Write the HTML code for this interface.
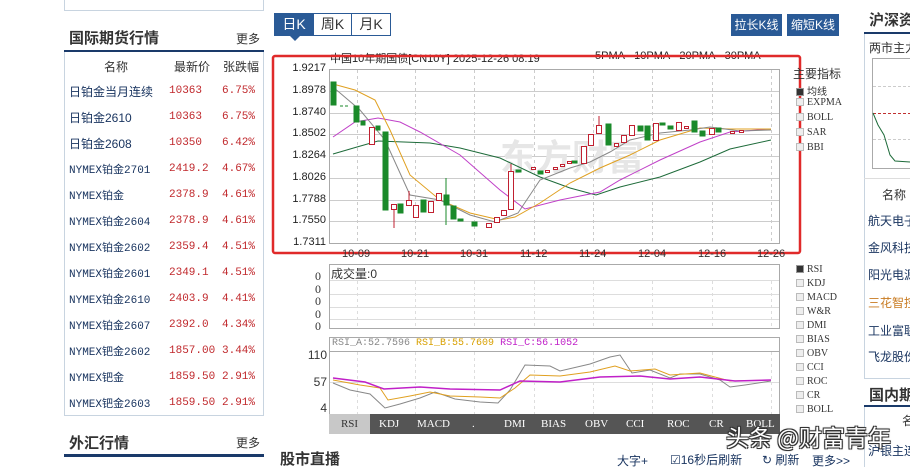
<!DOCTYPE html>
<html><head><meta charset="utf-8"><style>
*{margin:0;padding:0;box-sizing:border-box}
body{width:910px;height:462px;overflow:hidden;background:#fff;font-family:"Liberation Sans","Noto Sans CJK SC",sans-serif;font-size:12px;color:#333;position:relative}
.a{position:absolute;white-space:nowrap}
.m{font-family:"Liberation Mono","Noto Sans CJK SC",monospace}
.nm{color:#1a3560;font-size:12px}
.r{color:#c0282c;font-family:"Liberation Mono",monospace;font-size:11px}
.h{font-size:15px;font-weight:bold;color:#333}
.tab{position:absolute;top:13px;height:23px;border:1px solid #2a5a96;font-size:14px;text-align:center;line-height:21px;color:#333;background:#fff}
.btn{position:absolute;top:14px;height:22px;background:#2a5a96;color:#fff;font-size:12px;line-height:22px;text-align:center}
.yl{position:absolute;width:38px;text-align:right;font-size:11px;color:#222;left:288px}
.ind{position:absolute;left:796px;font-size:10px;color:#333;font-family:"Liberation Serif",serif}
.ind i{display:inline-block;width:8px;height:8px;border:1px solid #bbb;background:#eee;margin-right:3px;vertical-align:-1px}
</style></head><body>
<!-- left column -->
<div class="a" style="left:64px;top:0;width:200px;height:11px;border:1px solid #c8d4e0;border-top:none"></div>
<div class="a h" style="left:69px;top:27px">国际期货行情</div>
<div class="a" style="left:236px;top:30px;font-size:12px">更多</div>
<div class="a" style="left:64px;top:50px;width:200px;height:2px;background:#1a3a6a"></div>
<div class="a" style="left:64px;top:52px;width:200px;height:364px;border:1px solid #c8d4e0;border-top:none"></div>
<div class="a" style="left:104px;top:58px;font-size:12px">名称</div>
<div class="a" style="left:174px;top:58px;font-size:12px">最新价</div>
<div class="a" style="left:223px;top:58px;font-size:12px">张跌幅</div>
<div class="a nm" style="left:69px;top:83px">日铂金当月连续</div><div class="a r" style="left:169px;top:85px">10363</div><div class="a r" style="left:222px;top:85px">6.75%</div>
<div class="a nm" style="left:69px;top:109px">日铂金2610</div><div class="a r" style="left:169px;top:111px">10363</div><div class="a r" style="left:222px;top:111px">6.75%</div>
<div class="a nm" style="left:69px;top:135px">日铂金2608</div><div class="a r" style="left:169px;top:137px">10350</div><div class="a r" style="left:222px;top:137px">6.42%</div>
<div class="a nm m" style="left:69px;top:161px;font-size:11px">NYMEX铂金2701</div><div class="a r" style="left:169px;top:163px">2419.2</div><div class="a r" style="left:222px;top:163px">4.67%</div>
<div class="a nm m" style="left:69px;top:187px;font-size:11px">NYMEX铂金</div><div class="a r" style="left:169px;top:189px">2378.9</div><div class="a r" style="left:222px;top:189px">4.61%</div>
<div class="a nm m" style="left:69px;top:213px;font-size:11px">NYMEX铂金2604</div><div class="a r" style="left:169px;top:215px">2378.9</div><div class="a r" style="left:222px;top:215px">4.61%</div>
<div class="a nm m" style="left:69px;top:239px;font-size:11px">NYMEX铂金2602</div><div class="a r" style="left:169px;top:241px">2359.4</div><div class="a r" style="left:222px;top:241px">4.51%</div>
<div class="a nm m" style="left:69px;top:265px;font-size:11px">NYMEX铂金2601</div><div class="a r" style="left:169px;top:267px">2349.1</div><div class="a r" style="left:222px;top:267px">4.51%</div>
<div class="a nm m" style="left:69px;top:291px;font-size:11px">NYMEX铂金2610</div><div class="a r" style="left:169px;top:293px">2403.9</div><div class="a r" style="left:222px;top:293px">4.41%</div>
<div class="a nm m" style="left:69px;top:317px;font-size:11px">NYMEX铂金2607</div><div class="a r" style="left:169px;top:319px">2392.0</div><div class="a r" style="left:222px;top:319px">4.34%</div>
<div class="a nm m" style="left:69px;top:343px;font-size:11px">NYMEX钯金2602</div><div class="a r" style="left:169px;top:345px">1857.00</div><div class="a r" style="left:222px;top:345px">3.44%</div>
<div class="a nm m" style="left:69px;top:369px;font-size:11px">NYMEX钯金</div><div class="a r" style="left:169px;top:371px">1859.50</div><div class="a r" style="left:222px;top:371px">2.91%</div>
<div class="a nm m" style="left:69px;top:395px;font-size:11px">NYMEX钯金2603</div><div class="a r" style="left:169px;top:397px">1859.50</div><div class="a r" style="left:222px;top:397px">2.91%</div>
<div class="a h" style="left:69px;top:432px">外汇行情</div>
<div class="a" style="left:236px;top:434px">更多</div>
<div class="a" style="left:64px;top:454px;width:200px;height:3px;background:#1a3a6a"></div>

<!-- tabs -->
<div class="tab" style="left:274px;width:40px;background:#2a5a96;color:#fff">日K</div>
<div class="tab" style="left:313px;width:39px">周K</div>
<div class="tab" style="left:351px;width:40px">月K</div>
<div class="a" style="left:290px;top:36px;border:5px solid transparent;border-top-color:#2a5a96;width:0;height:0"></div>
<div class="btn" style="left:731px;width:51px">拉长K线</div>
<div class="btn" style="left:787px;width:52px">缩短K线</div>

<!-- chart title -->
<div class="a" style="left:330px;top:50px;font-size:11px;color:#222">中国10年期国债[CN10Y] 2025-12-26 08:19</div>
<div class="a" style="left:595px;top:50px;font-size:11px;color:#222">5PMA - 10PMA - 20PMA - 30PMA -</div>

<div class="yl" style="top:62px">1.9217</div>
<div class="yl" style="top:84px">1.8978</div>
<div class="yl" style="top:106px">1.8740</div>
<div class="yl" style="top:127px">1.8502</div>
<div class="yl" style="top:149px">1.8264</div>
<div class="yl" style="top:171px">1.8026</div>
<div class="yl" style="top:193px">1.7788</div>
<div class="yl" style="top:214px">1.7550</div>
<div class="yl" style="top:236px">1.7311</div>

<svg class="a" style="left:0;top:0" width="910" height="462">
<g stroke="#ccc" stroke-width="1">
<rect x="329.5" y="69.5" width="450" height="174" fill="none" stroke="#aaa"/>
<line x1="330" x2="779" y1="91.5" y2="91.5"/><line x1="330" x2="779" y1="113.5" y2="113.5"/><line x1="330" x2="779" y1="134.5" y2="134.5"/><line x1="330" x2="779" y1="156.5" y2="156.5"/><line x1="330" x2="779" y1="178.5" y2="178.5"/><line x1="330" x2="779" y1="200.5" y2="200.5"/><line x1="330" x2="779" y1="221.5" y2="221.5"/>
</g>
<g stroke="#ccc" stroke-dasharray="3,3">
<line x1="357.5" x2="357.5" y1="70" y2="243"/><line x1="415.5" x2="415.5" y1="70" y2="243"/><line x1="474.5" x2="474.5" y1="70" y2="243"/><line x1="534.5" x2="534.5" y1="70" y2="243"/><line x1="593.5" x2="593.5" y1="70" y2="243"/><line x1="652.5" x2="652.5" y1="70" y2="243"/><line x1="712.5" x2="712.5" y1="70" y2="243"/><line x1="771.5" x2="771.5" y1="70" y2="243"/>
</g>
<text x="500" y="170" font-size="36" fill="#e6e6e6" font-weight="bold" font-family="Noto Sans CJK SC,sans-serif">东方财富</text>
<g fill="none" stroke-width="1">
<polyline stroke="#1e6b3a" points="333,154 357,147 378,141 430,143 460,148 500,158 540,177 570,188 596,195 620,187 660,177 700,162 730,149 771,140"/>
<polyline stroke="#c040c8" points="333,137 355,122 378,118 400,122 420,132 460,155 500,190 525,209 560,200 600,192 620,180 660,160 700,142 730,132 771,129"/>
<polyline stroke="#e0a020" points="333,84 355,90 375,100 390,130 410,175 440,200 470,213 500,220 515,217 540,203 570,183 600,168 630,155 660,140 700,128 730,129 771,129"/>
<polyline stroke="#888" points="333,87 360,110 385,140 410,195 440,200 470,215 495,222 518,213 540,180 570,168 590,162 610,152 630,140 660,133 690,130 710,127 740,131 771,130"/>
</g>
<g stroke-width="1">
<g fill="#1a8a2a" stroke="#1a8a2a">
<rect x="331" y="82" width="5" height="23"/><line x1="340" x2="350" y1="106" y2="106" stroke-dasharray="3,2"/><rect x="354" y="106" width="5" height="16"/><rect x="361" y="121" width="4" height="4"/><rect x="376" y="126" width="4" height="4"/><rect x="383" y="132" width="5" height="78"/><rect x="398" y="204" width="5" height="9"/><rect x="421" y="200" width="5" height="12"/><rect x="444" y="195" width="5" height="10"/><line x1="446" x2="446" y1="178" y2="225"/><rect x="451" y="206" width="5" height="13"/><rect x="458" y="219" width="5" height="2"/><rect x="472" y="222" width="5" height="4"/><rect x="516" y="170" width="5" height="2"/><rect x="538" y="171" width="5" height="3"/><rect x="572" y="161" width="5" height="2"/><rect x="606" y="124" width="5" height="21"/><rect x="638" y="126" width="5" height="5"/><rect x="645" y="126" width="5" height="14"/><rect x="660" y="123" width="5" height="2"/><rect x="668" y="126" width="5" height="3"/><rect x="692" y="121" width="5" height="11"/><rect x="700" y="131" width="5" height="5"/><rect x="716" y="128" width="5" height="4"/>
</g>
<g fill="#fff" stroke="#c02030">
<rect x="369.5" y="127.5" width="5" height="17"/><rect x="391.5" y="204.5" width="5" height="5"/><line x1="394" x2="394" y1="210" y2="228"/><rect x="406.5" y="200.5" width="5" height="5"/><line x1="409" x2="409" y1="191" y2="200"/><rect x="413.5" y="205.5" width="5" height="12"/><rect x="428.5" y="201.5" width="5" height="11"/><rect x="436.5" y="193.5" width="5" height="7"/><rect x="486.5" y="223.5" width="5" height="4"/><rect x="494.5" y="217.5" width="5" height="5"/><rect x="501.5" y="210.5" width="5" height="5"/><rect x="508.5" y="171.5" width="5" height="38"/><line x1="511" x2="511" y1="164" y2="171"/><rect x="531.5" y="167.5" width="4" height="2"/><rect x="545.5" y="170.5" width="4" height="2"/><rect x="553.5" y="167.5" width="4" height="2"/><rect x="560.5" y="164.5" width="4" height="2"/><rect x="567.5" y="161.5" width="4" height="2"/><rect x="581.5" y="146.5" width="5" height="17"/><rect x="588.5" y="134.5" width="5" height="11"/><rect x="596.5" y="125.5" width="5" height="8"/><line x1="599" x2="599" y1="116" y2="125"/><rect x="614.5" y="143.5" width="4" height="3"/><rect x="621.5" y="135.5" width="5" height="7"/><rect x="629.5" y="125.5" width="5" height="10"/><rect x="653.5" y="123.5" width="5" height="17"/><rect x="676.5" y="122.5" width="5" height="8"/><rect x="684.5" y="126.5" width="4" height="2"/><rect x="709.5" y="128.5" width="5" height="6"/><rect x="730.5" y="131.5" width="4" height="2"/><rect x="739.5" y="130.5" width="4" height="2"/>
</g>
</g>
<!-- red annotation -->
<rect x="273" y="56" width="527" height="197" fill="none" stroke="#e02a2a" stroke-width="2.5" rx="2"/>
<!-- volume panel -->
<rect x="329.5" y="264.5" width="450" height="64" fill="none" stroke="#aaa"/>
<g stroke="#ddd"><line x1="330" x2="779" y1="280.5" y2="280.5"/><line x1="330" x2="779" y1="294.5" y2="294.5"/><line x1="330" x2="779" y1="307.5" y2="307.5"/><line x1="330" x2="779" y1="319.5" y2="319.5"/></g>
<g stroke="#ddd" stroke-dasharray="3,3"><line x1="357.5" x2="357.5" y1="281" y2="328"/><line x1="415.5" x2="415.5" y1="281" y2="328"/><line x1="474.5" x2="474.5" y1="281" y2="328"/><line x1="534.5" x2="534.5" y1="281" y2="328"/><line x1="593.5" x2="593.5" y1="281" y2="328"/><line x1="652.5" x2="652.5" y1="281" y2="328"/><line x1="712.5" x2="712.5" y1="281" y2="328"/><line x1="771.5" x2="771.5" y1="281" y2="328"/></g>
<!-- RSI panel -->
<rect x="329.5" y="337.5" width="450" height="77" fill="none" stroke="#aaa"/>
<line x1="330" x2="779" y1="351.5" y2="351.5" stroke="#aaa"/>
<line x1="330" x2="779" y1="382.5" y2="382.5" stroke="#ddd"/>
<g stroke="#ddd" stroke-dasharray="3,3"><line x1="357.5" x2="357.5" y1="352" y2="414"/><line x1="415.5" x2="415.5" y1="352" y2="414"/><line x1="474.5" x2="474.5" y1="352" y2="414"/><line x1="534.5" x2="534.5" y1="352" y2="414"/><line x1="593.5" x2="593.5" y1="352" y2="414"/><line x1="652.5" x2="652.5" y1="352" y2="414"/><line x1="712.5" x2="712.5" y1="352" y2="414"/><line x1="771.5" x2="771.5" y1="352" y2="414"/></g>
<g fill="none">
<polyline stroke="#888" points="333,383 350,390 370,394 385,408 400,404 420,398 435,392 455,399 480,402 498,403 510,390 525,365 550,366 560,371 590,364 610,357 620,355 632,373 650,370 670,378 680,374 700,374 720,380 730,387 745,385 771,381"/>
<polyline stroke="#e0a020" points="333,380 360,385 380,388 388,400 410,396 430,392 450,396 480,397 500,398 515,388 530,375 560,376 590,372 615,366 630,371 655,369 670,375 700,373 730,381 771,380"/>
<polyline stroke="#c020c8" stroke-width="1.5" points="333,378 365,382 384,389 420,387 450,389 500,390 520,381 560,382 600,377 640,376 670,379 700,377 735,381 771,380"/>
</g>
<!-- right mini chart -->
<rect x="872.5" y="58.5" width="40" height="110" fill="none" stroke="#aaa"/>
<line x1="873" x2="910" y1="113.5" y2="113.5" stroke="#c03030" stroke-dasharray="3,2"/>
<line x1="873" x2="910" y1="86.5" y2="86.5" stroke="#ccc" stroke-dasharray="3,2"/>
<line x1="873" x2="910" y1="139.5" y2="139.5" stroke="#ccc" stroke-dasharray="3,2"/>
<polyline fill="none" stroke="#1e6b3a" points="873,113 878,125 884,135 890,155 895,161 910,162"/>
</svg>

<!-- date labels -->
<div class="a" style="left:342px;top:248px;font-size:11px;color:#333">10-09</div>
<div class="a" style="left:401px;top:248px;font-size:11px;color:#333">10-21</div>
<div class="a" style="left:460px;top:248px;font-size:11px;color:#333">10-31</div>
<div class="a" style="left:520px;top:248px;font-size:11px;color:#333">11-12</div>
<div class="a" style="left:579px;top:248px;font-size:11px;color:#333">11-24</div>
<div class="a" style="left:638px;top:248px;font-size:11px;color:#333">12-04</div>
<div class="a" style="left:698px;top:248px;font-size:11px;color:#333">12-16</div>
<div class="a" style="left:757px;top:248px;font-size:11px;color:#333">12-26</div>

<div class="a" style="left:793px;top:65px;font-size:12px">主要指标</div>
<div class="ind" style="top:83px"><i style="background:#333;border-color:#999"></i>均线</div>
<div class="ind" style="top:97px"><i></i>EXPMA</div>
<div class="ind" style="top:112px"><i></i>BOLL</div>
<div class="ind" style="top:127px"><i></i>SAR</div>
<div class="ind" style="top:142px"><i></i>BBI</div>

<!-- volume labels -->
<div class="a" style="left:331px;top:265px;font-size:12px">成交量:0</div>
<div class="a" style="left:315px;top:270px;font-size:12px;line-height:12.5px;font-family:'Liberation Serif',serif">0<br>0<br>0<br>0<br>0</div>
<div class="a" style="left:332px;top:338px;font-size:10px;font-family:'Liberation Mono',monospace"><span style="color:#888">RSI_A:52.7596</span> <span style="color:#d8a000">RSI_B:55.7609</span> <span style="color:#c020c8">RSI_C:56.1052</span></div>
<div class="a" style="left:303px;top:348px;font-size:12px;width:24px;text-align:right">110</div>
<div class="a" style="left:303px;top:375px;font-size:12px;width:24px;text-align:right">57</div>
<div class="a" style="left:303px;top:401px;font-size:12px;width:24px;text-align:right">4</div>
<div class="a" style="left:329px;top:414px;width:451px;height:20px;background:#555;font-size:11px;color:#fff;font-family:'Liberation Serif',serif;line-height:20px">
<span class="a" style="left:0;top:0;width:41px;height:20px;background:#c8c8c8;color:#333;text-align:center">RSI</span>
<span class="a" style="left:50px">KDJ</span><span class="a" style="left:88px">MACD</span><span class="a" style="left:143px">.</span><span class="a" style="left:175px">DMI</span><span class="a" style="left:212px">BIAS</span><span class="a" style="left:256px">OBV</span><span class="a" style="left:297px">CCI</span><span class="a" style="left:338px">ROC</span><span class="a" style="left:380px">CR</span><span class="a" style="left:417px">BOLL</span>
</div>
<div class="ind" style="top:264px"><i style="background:#333;border-color:#999"></i>RSI</div>
<div class="ind" style="top:278px"><i></i>KDJ</div>
<div class="ind" style="top:292px"><i></i>MACD</div>
<div class="ind" style="top:306px"><i></i>W&amp;R</div>
<div class="ind" style="top:320px"><i></i>DMI</div>
<div class="ind" style="top:334px"><i></i>BIAS</div>
<div class="ind" style="top:348px"><i></i>OBV</div>
<div class="ind" style="top:362px"><i></i>CCI</div>
<div class="ind" style="top:376px"><i></i>ROC</div>
<div class="ind" style="top:390px"><i></i>CR</div>
<div class="ind" style="top:404px"><i></i>BOLL</div>

<!-- bottom -->
<div class="a h" style="left:280px;top:448px">股市直播</div>
<div class="a" style="left:617px;top:452px;color:#1a3560">大字+</div>
<div class="a" style="left:670px;top:451px;color:#1a3560">☑16秒后刷新</div>
<div class="a" style="left:762px;top:451px;color:#1a3560">↻ 刷新</div>
<div class="a" style="left:812px;top:452px;color:#1a3560">更多&gt;&gt;</div>

<!-- right column -->
<div class="a h" style="left:869px;top:9px">沪深资金</div>
<div class="a" style="left:864px;top:32px;width:46px;height:2px;background:#1a3a6a"></div>
<div class="a" style="left:864px;top:34px;width:50px;height:345px;border-left:1px solid #c8d4e0;border-bottom:1px solid #c8d4e0"></div>
<div class="a" style="left:869px;top:39px">两市主力</div>
<div class="a" style="left:864px;top:178px;width:46px;border-top:1px solid #ddd"></div>
<div class="a" style="left:882px;top:186px">名称</div>
<div class="a nm" style="left:868px;top:212px">航天电子</div>
<div class="a nm" style="left:868px;top:239px">金风科技</div>
<div class="a nm" style="left:868px;top:266px">阳光电源</div>
<div class="a" style="left:868px;top:294px;color:#c87a20">三花智控</div>
<div class="a nm" style="left:868px;top:322px">工业富联</div>
<div class="a nm" style="left:868px;top:348px">飞龙股份</div>
<div class="a h" style="left:869px;top:384px">国内期货</div>
<div class="a" style="left:864px;top:405px;width:46px;height:2px;background:#1a3a6a"></div>
<div class="a" style="left:864px;top:407px;height:60px;border-left:1px solid #c8d4e0"></div>
<div class="a" style="left:902px;top:412px">名</div>
<div class="a nm" style="left:868px;top:442px">沪银主连</div>

<!-- watermark -->
<div class="a" style="left:726px;top:419px;font-size:23px;color:#fff;font-family:'Noto Sans CJK SC',sans-serif;text-shadow:-1px -1px 0 #333,1px -1px 0 #333,-1px 1px 0 #333,1px 1px 0 #333,0 0 2px #000">头条 @财富青年</div>
</body></html>
